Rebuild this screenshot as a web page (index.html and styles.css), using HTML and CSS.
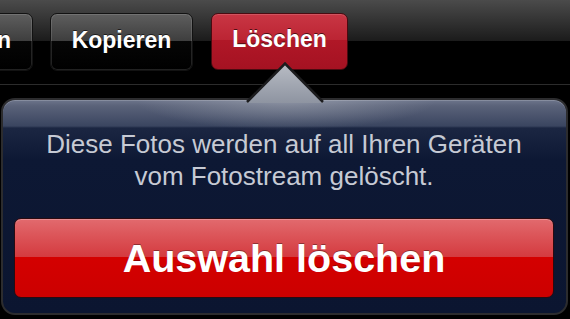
FILE: index.html
```html
<!DOCTYPE html>
<html lang="de">
<head>
<meta charset="utf-8">
<title>Fotostream</title>
<link rel="stylesheet" href="styles.css">
</head>
<body>
<div class="screen">
  <div class="toolbar">
    <div class="btn-row">
      <button class="tbtn tbtn-first">Senden</button>
      <button class="tbtn tbtn-copy">Kopieren</button>
      <button class="tbtn tbtn-red">Löschen</button>
    </div>
  </div>
  <div class="divider"></div>
  <div class="popover">
    <svg class="arrow" width="80" height="42" viewBox="0 0 80 42">
      <defs>
        <linearGradient id="ag" x1="0" y1="0" x2="0" y2="1">
          <stop offset="0" stop-color="#b8bcc4"/>
          <stop offset="1" stop-color="#8e94a1"/>
        </linearGradient>
      </defs>
      <polygon points="40,3 78,42 2,42" fill="url(#ag)"/>
      <path d="M2,41 L40,2.5 L78,41" fill="none" stroke="#1c1c1e" stroke-width="2.5"/>
    </svg>
    <p class="msg">Diese Fotos werden auf all Ihren Geräten<br>vom Fotostream gelöscht.</p>
    <button class="danger">Auswahl löschen</button>
  </div>
</div>
</body>
</html>
```

FILE: styles.css
```css
html, body {
  margin: 0;
  padding: 0;
  background: #000;
}
.screen {
  width: 570px;
  height: 319px;
  overflow: hidden;
  background: #000;
  font-family: "Liberation Sans", Arial, sans-serif;
}
.toolbar {
  height: 84px;
  background: linear-gradient(to bottom, #4b4b4b 0, #1b1b1b 41px, #000 41px, #000 100%);
  overflow: hidden;
}
.btn-row {
  display: flex;
  gap: 17px;
  padding-top: 13px;
  margin-left: -94px;
}
.tbtn {
  height: 58px;
  padding: 0 0 4px;
  border: 1px solid #121212;
  border-radius: 7px;
  background: linear-gradient(to bottom, #5e5e5e 0, #3e3e3e 48%, #060606 48%, #000 100%);
  box-shadow: inset 0 0 0 1px rgba(255, 255, 255, 0.13);
  color: #fff;
  font-family: "Liberation Sans", Arial, sans-serif;
  font-weight: bold;
  font-size: 23px;
  text-shadow: 0 -1px 0 rgba(0, 0, 0, 0.6);
  flex: none;
}
.tbtn-first {
  width: 127px;
}
.tbtn-copy {
  width: 143px;
}
.tbtn-red {
  width: 137px;
  height: 57px;
  margin-left: 1px;
  border-color: #4a0a10;
  background: linear-gradient(to bottom, #c93644 0, #bb2433 48%, #b01727 48%, #a51222 100%);
  box-shadow: inset 0 1px 0 rgba(255, 255, 255, 0.15);
}
.divider {
  height: 1px;
  background: #2c2c2c;
  margin-bottom: 13px;
}
.popover {
  position: relative;
  margin: 0 2px 0 1px;
  height: 213px;
  padding: 0 12px 0 11px;
  border: 2px solid #2c2c2e;
  border-radius: 14px;
  background:
    radial-gradient(ellipse 150px 30px at 283px 0, rgba(170, 175, 186, 0.55), rgba(170, 175, 186, 0) 100%),
    linear-gradient(to bottom, #6d758b 0, #5a6279 6px, #3a4560 26px, #1b2642 28px, #0d1834 60px, #0b1530 100%);
  box-shadow: inset 0 1px 0 rgba(255, 255, 255, 0.18);
}
.arrow {
  position: absolute;
  left: 242px;
  top: -39px;
  display: block;
}
.msg {
  margin: 0;
  padding-top: 28px;
  font-size: 26px;
  line-height: 32px;
  color: #c6cad4;
  text-align: center;
}
.danger {
  display: flex;
  align-items: center;
  justify-content: center;
  width: 100%;
  height: 80px;
  margin-top: 26px;
  border: 1px solid #2a0a10;
  border-radius: 7px;
  background: linear-gradient(to bottom, #e26a6e 0, #dc565a 20%, #d43a3f 49%, #d40000 49%, #cc0000 100%);
  box-shadow: inset 0 1px 0 rgba(255, 255, 255, 0.25);
  color: #fff;
  font-family: "Liberation Sans", Arial, sans-serif;
  font-weight: bold;
  font-size: 39.5px;
  text-shadow: 0 -1px 0 rgba(0, 0, 0, 0.35);
}
```
